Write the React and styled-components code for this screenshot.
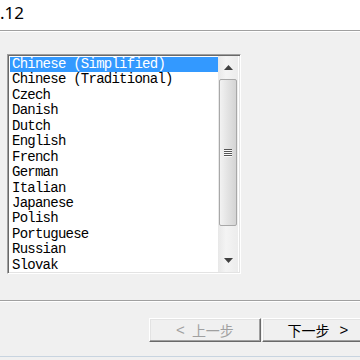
import React from 'react';
import styled, { createGlobalStyle } from 'styled-components';

const GlobalStyle = createGlobalStyle`
  html, body {
    margin: 0;
    padding: 0;
    background: #f0f0f0;
  }
  body {
    width: 360px;
    height: 360px;
    overflow: hidden;
  }
`;

const languages = [
  'Chinese (Simplified)',
  'Chinese (Traditional)',
  'Czech',
  'Danish',
  'Dutch',
  'English',
  'French',
  'German',
  'Italian',
  'Japanese',
  'Polish',
  'Portuguese',
  'Russian',
  'Slovak',
];

const Wizard = () => {
  return (
    <Window>
      <Header>
        <Title>.12</Title>
      </Header>
      <Body>
        <ListBox>
          <Items>
            {languages.map((lang, i) => (
              <Item key={lang} selected={i === 0}>
                {lang}
              </Item>
            ))}
          </Items>
          <ScrollBar>
            <ArrowButton>
              <svg width="9" height="5" viewBox="0 0 9 5">
                <path d="M0 5 L4.5 0 L9 5 Z" fill="#404040" />
              </svg>
            </ArrowButton>
            <Thumb>
              <Grip>
                <span />
                <span />
                <span />
                <span />
              </Grip>
            </Thumb>
            <Track />
            <ArrowButton>
              <svg width="9" height="5" viewBox="0 0 9 5">
                <path d="M0 0 L9 0 L4.5 5 Z" fill="#404040" />
              </svg>
            </ArrowButton>
          </ScrollBar>
        </ListBox>
      </Body>
      <Footer>
        <Buttons>
          <NavButton disabled>
            <Chevron>&lt;</Chevron>
            上一步
          </NavButton>
          <NavButton>
            下一步
            <Chevron after>&gt;</Chevron>
          </NavButton>
        </Buttons>
        <Frame />
      </Footer>
    </Window>
  );
};

const Window = styled.div`
  display: flex;
  flex-direction: column;
  width: 360px;
  height: 360px;
  overflow: hidden;
`;

const Header = styled.div`
  height: 30px;
  background: #fff;
  border-bottom: 1px solid #a0a0a0;
  box-shadow: 0 1px 0 #fff;
`;

const Title = styled.div`
  font-family: 'Noto Sans', 'Open Sans', sans-serif;
  font-size: 17px;
  line-height: 17px;
  padding-top: 4px;
  color: #000;
`;

const Body = styled.div`
  padding: 23px 0 0 7px;
`;

const ListBox = styled.div`
  display: flex;
  width: 234px;
  height: 220px;
  box-sizing: border-box;
  background: #fff;
  border: 1px solid;
  border-color: #a0a0a0 #fff #fff #a0a0a0;
  box-shadow: inset 1px 1px 0 #696969, inset -1px -1px 0 #e3e3e3;
  padding: 1px 2px 1px 1px;
`;

const Items = styled.div`
  flex: 1;
  padding: 1px 0 0 1px;
  overflow: hidden;
`;

const Item = styled.div`
  height: 15.45px;
  line-height: 15.45px;
  padding-left: 2px;
  font-family: 'Liberation Mono', monospace;
  font-size: 14px;
  letter-spacing: -0.75px;
  white-space: nowrap;
  color: ${(p) => (p.selected ? '#fff' : '#000')};
  background: ${(p) => (p.selected ? '#3399ff' : 'transparent')};
`;

const ScrollBar = styled.div`
  display: flex;
  flex-direction: column;
  width: 20px;
  background: linear-gradient(to right, #e8e8e8, #f4f4f4 40%, #ececec);
`;

const ArrowButton = styled.div`
  height: 23px;
  display: flex;
  align-items: center;
  justify-content: center;
`;

const Thumb = styled.div`
  height: 147px;
  margin: 0 1px;
  box-sizing: border-box;
  border: 1px solid #a8a8a8;
  border-radius: 2px;
  background: linear-gradient(to right, #f2f2f2, #e4e4e4 45%, #d4d4d4);
  display: flex;
  align-items: center;
  justify-content: center;
`;

const Grip = styled.div`
  display: flex;
  flex-direction: column;
  gap: 1px;
  margin-left: -1px;

  span {
    display: block;
    width: 8px;
    height: 1px;
    background: #555;
    box-shadow: 0 1px 0 #fafafa;
  }
`;

const Track = styled.div`
  flex: 1;
`;

const Footer = styled.div`
  margin-top: 26px;
  border-top: 1px solid #a0a0a0;
  box-shadow: inset 0 1px 0 #fff;
  flex: 1;
  display: flex;
  flex-direction: column;
`;

const Buttons = styled.div`
  display: flex;
  gap: 1px;
  padding: 17px 0 0 149px;
`;

const NavButton = styled.div`
  flex: none;
  width: 112px;
  height: 24px;
  box-sizing: border-box;
  display: flex;
  align-items: center;
  justify-content: center;
  background: #f0f0f0;
  border: 1px solid;
  border-color: #fff #696969 #696969 #fff;
  box-shadow: inset -1px -1px 0 #a0a0a0, inset 1px 1px 0 #e3e3e3;
  font-family: 'Noto Sans CJK SC', sans-serif;
  font-size: 14px;
  color: ${(p) => (p.disabled ? '#a0a0a0' : '#000')};
  padding-bottom: 1px;
`;

const Chevron = styled.span`
  font-family: 'Liberation Sans', sans-serif;
  font-size: 15px;
  font-weight: 300;
  ${(p) => (p.after ? 'margin-left: 10px;' : 'margin-right: 7px;')}
`;

const Frame = styled.div`
  margin-top: auto;
  margin-bottom: 3px;
  height: 1px;
  background: #c8d4e0;
`;

const App = () => (
  <>
    <GlobalStyle />
    <Wizard />
  </>
);

export default App;
